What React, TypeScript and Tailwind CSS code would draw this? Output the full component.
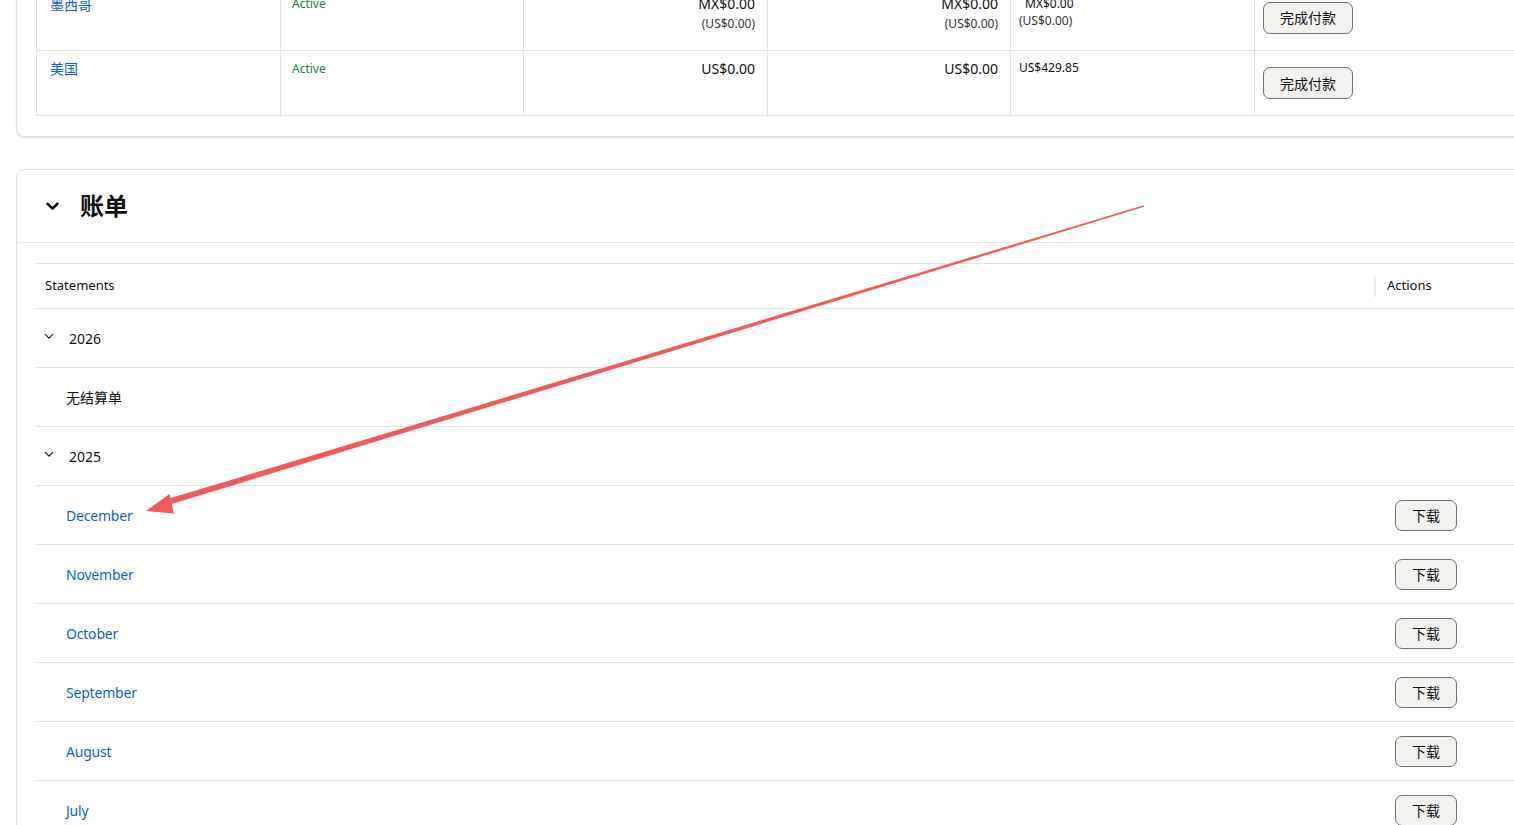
import React from "react";

const FONT = { fontFamily: '"Noto Sans", "Noto Sans CJK SC", sans-serif' };

function Chevron({ className, sw }: { className?: string; sw: number }) {
  return (
    <svg viewBox="0 0 12 8" className={className} fill="none">
      <polyline points="1.5,1.5 6,6 10.5,1.5" stroke="#0f1111" strokeWidth={sw} strokeLinecap="round" strokeLinejoin="round" />
    </svg>
  );
}

function Btn({ label, className }: { label: string; className?: string }) {
  return (
    <button
      className={
        "rounded-[7px] border border-[#6f6f6f] bg-[#f3f2ef] text-[14px] text-[#0f1111] flex items-center justify-center " +
        (className || "")
      }
    >
      {label}
    </button>
  );
}

const months = ["December", "November", "October", "September", "August", "July"];

export default function App() {
  return (
    <div className="relative w-[1514px] h-[825px] overflow-hidden bg-white text-[#0f1111]" style={FONT}>
      <div className="w-[1600px] pl-[16px]">
        {/* Card 1 */}
        <div className="mt-[-35px] rounded-b-[8px] border border-[#e1e1e1] bg-white shadow-[0_1px_2px_rgba(0,0,0,0.12)] px-[19px] pt-[20px] pb-[20px]">
          <div className="border-l border-[#e3e3e3]">
            {/* Row 1 */}
            <div className="grid grid-cols-[243px_243px_244px_243px_244px_400px] h-[65px] border-b border-[#e3e3e3]">
              <div className="pl-[13px] pt-[9px] text-[14px] leading-[20px] text-[#0b5fcc]">墨西哥</div>
              <div className="border-l border-[#e3e3e3] pl-[11px] pt-[10px] text-[12px] leading-[16px] text-[#1a7f37]">Active</div>
              <div className="border-l border-[#e3e3e3] pr-[12px] pt-[8px] text-right">
                <div className="text-[14px] leading-[20px]">MX$0.00</div>
                <div className="mt-[2px] text-[12px] leading-[16px] text-[#333]">(US$0.00)</div>
              </div>
              <div className="border-l border-[#e3e3e3] pr-[12px] pt-[8px] text-right">
                <div className="text-[14px] leading-[20px]">MX$0.00</div>
                <div className="mt-[2px] text-[12px] leading-[16px] text-[#333]">(US$0.00)</div>
              </div>
              <div className="border-l border-[#e3e3e3] pl-[8px] pt-[9px]">
                <div className="text-[12px] leading-[17px] pl-[6px]">MX$0.00</div>
                <div className="text-[12px] leading-[17px] text-[#333]">(US$0.00)</div>
              </div>
              <div className="border-l border-[#e3e3e3] pl-[8px] pb-[1px] flex items-center">
                <Btn label="完成付款" className="w-[90px] h-[32px]" />
              </div>
            </div>
            {/* Row 2 */}
            <div className="grid grid-cols-[243px_243px_244px_243px_244px_400px] h-[65px] border-b border-[#e3e3e3]">
              <div className="pl-[13px] pt-[8px] text-[14px] leading-[20px] text-[#0b5fcc]">美国</div>
              <div className="border-l border-[#e3e3e3] pl-[11px] pt-[10px] text-[12px] leading-[16px] text-[#1a7f37]">Active</div>
              <div className="border-l border-[#e3e3e3] pr-[12px] pt-[8px] text-right text-[14px] leading-[20px]">US$0.00</div>
              <div className="border-l border-[#e3e3e3] pr-[12px] pt-[8px] text-right text-[14px] leading-[20px]">US$0.00</div>
              <div className="border-l border-[#e3e3e3] pl-[8px] pt-[9px] text-[12px] leading-[16px]">US$429.85</div>
              <div className="border-l border-[#e3e3e3] pl-[8px] flex items-center">
                <Btn label="完成付款" className="w-[90px] h-[32px]" />
              </div>
            </div>
          </div>
        </div>

        {/* Card 2 */}
        <div className="mt-[32px] rounded-[8px] border border-[#e1e1e1] bg-white">
          <div className="h-[73px] flex items-center border-b border-[#e6e6e6] pl-[29px]">
            <Chevron className="w-[13px] h-[9px]" sw={2.4} />
            <div className="ml-[21px] text-[24px] font-bold leading-[30px]">账单</div>
          </div>
          <div className="px-[19px] pt-[20px]">
            <div className="h-[46px] border-t border-b border-[#e3e3e3] flex items-center">
              <div className="w-[1338px] pl-[9px] text-[13px]">Statements</div>
              <div className="w-[2px] h-[21px] bg-[#ececec]" />
              <div className="pl-[11px] text-[13px]">Actions</div>
            </div>
            <div className="h-[59px] border-b border-[#e3e3e3] flex items-center">
              <Chevron className="ml-[8px] w-[10px] h-[7px] -mt-[4px]" sw={1.3} />
              <div className="ml-[15px] text-[14px]">2026</div>
            </div>
            <div className="h-[59px] border-b border-[#e3e3e3] flex items-center pl-[30px] text-[14px]">无结算单</div>
            <div className="h-[59px] border-b border-[#e3e3e3] flex items-center">
              <Chevron className="ml-[8px] w-[10px] h-[7px] -mt-[4px]" sw={1.3} />
              <div className="ml-[15px] text-[14px]">2025</div>
            </div>
            {months.map((m) => (
              <div key={m} className="h-[59px] border-b border-[#e3e3e3] flex items-center">
                <div className="w-[1339px] pl-[30px] text-[14px] tracking-[-0.2px] text-[#0b5fcc]">{m}</div>
                <div className="pl-[20px]">
                  <Btn label="下载" className="w-[62px] h-[31px]" />
                </div>
              </div>
            ))}
          </div>
        </div>
      </div>

      {/* annotation arrow */}
      <svg className="absolute inset-0 pointer-events-none" width="1514" height="825" viewBox="0 0 1514 825">
        <polygon
          points="1144.3,206.8 1143.7,205.2 169,498.6 170.8,504.2"
          fill="#f25a5a"
        />
        <polygon points="146,511 169.5,494 174,513.5" fill="#f25a5a" />
      </svg>
    </div>
  );
}
